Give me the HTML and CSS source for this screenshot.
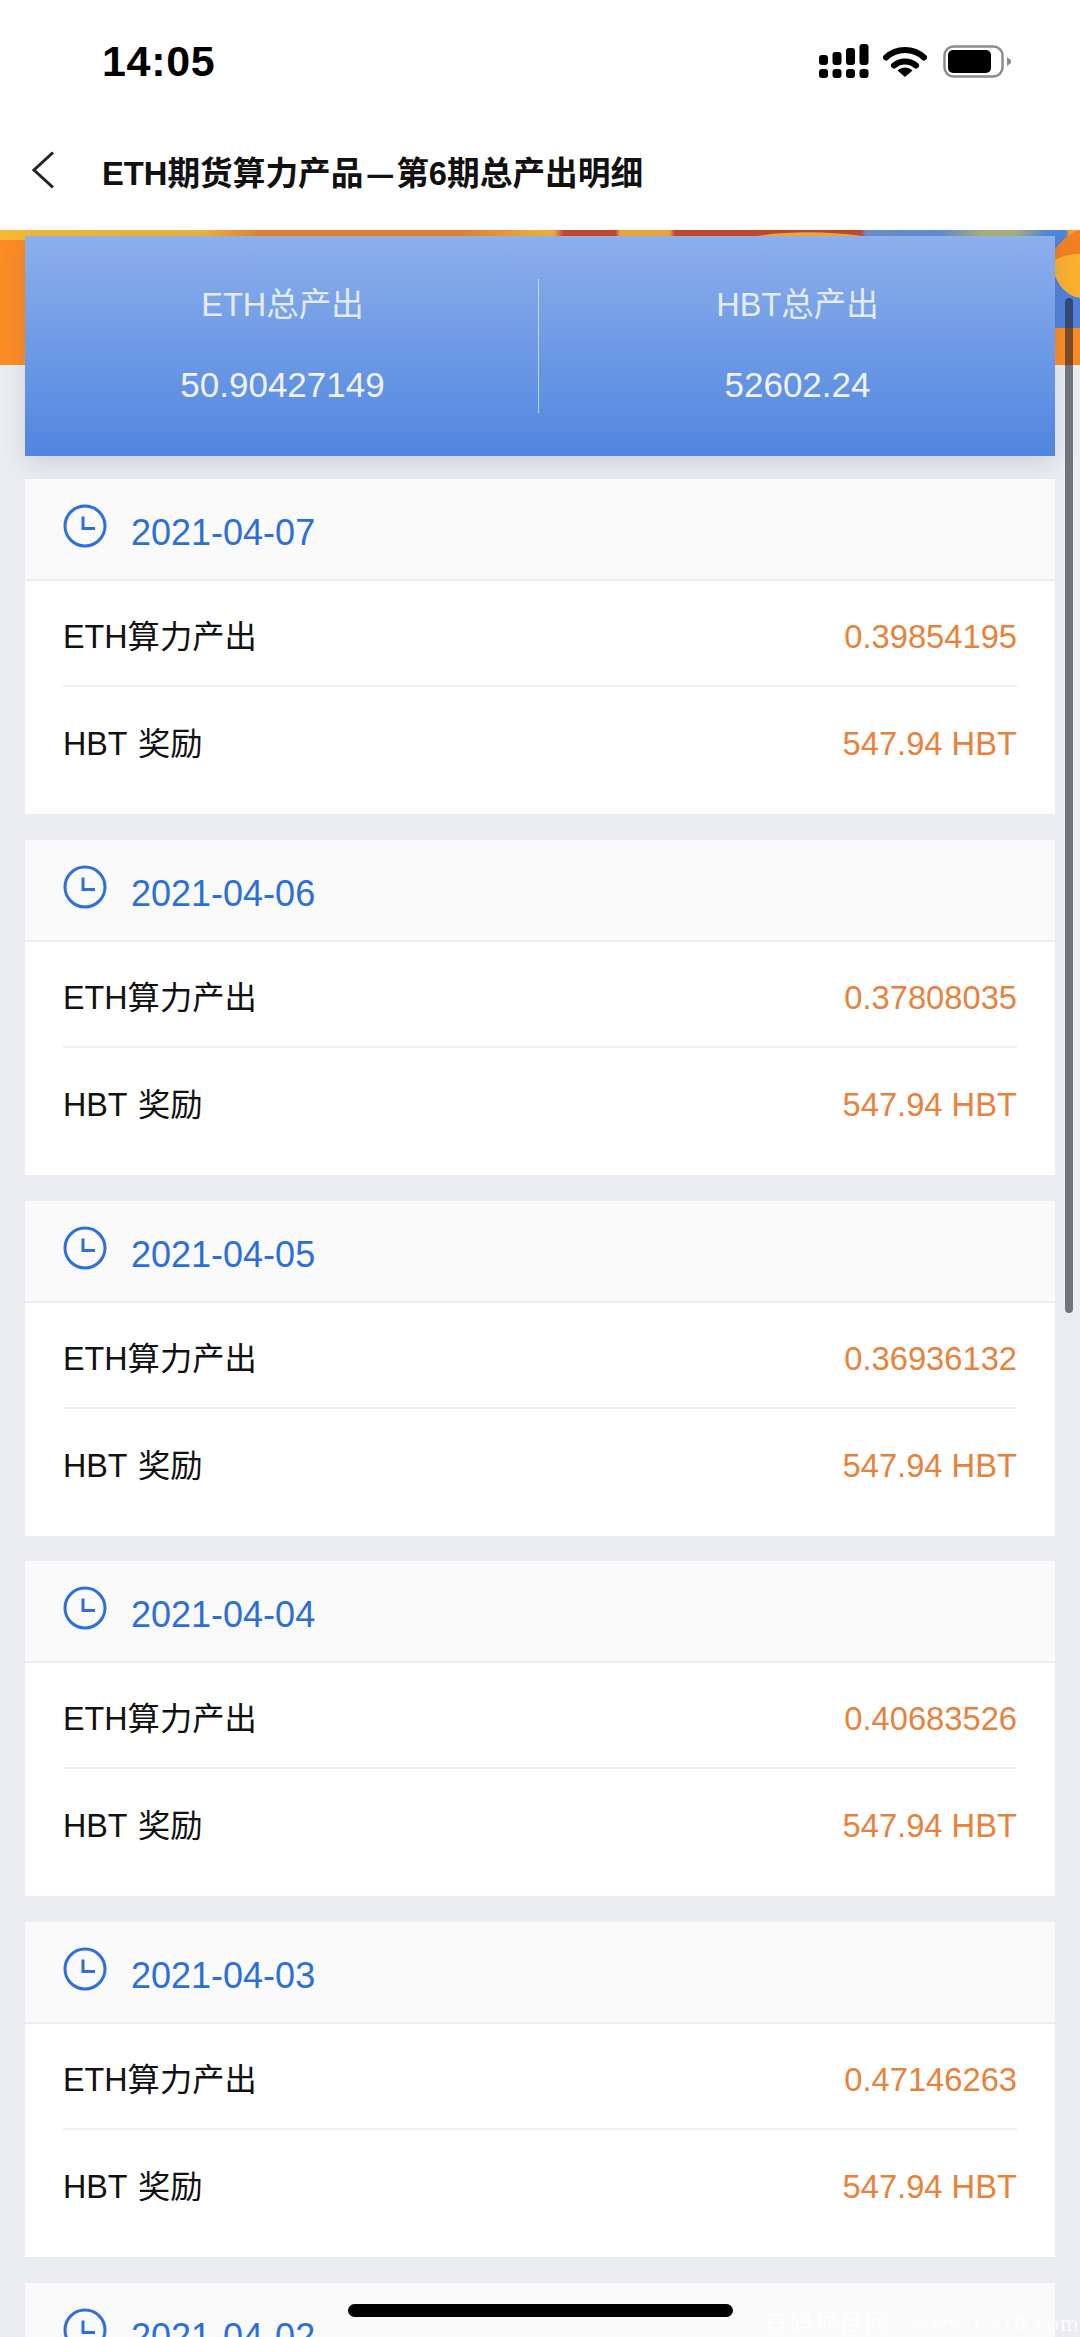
FILE: index.html
```html
<!DOCTYPE html>
<html lang="zh-CN">
<head>
<meta charset="utf-8">
<title>ETH期货算力产品</title>
<link rel="stylesheet" href="styles.css">
</head>
<body>
<div class="page">
  <div class="status">
    <span class="time">14:05</span>
    <div class="status-icons">
      <svg class="signal" width="50" height="36" viewBox="0 0 50 36"><g fill="#000"><rect x="0" y="12" width="9" height="10" rx="3"/><rect x="13.500" y="9" width="9" height="13" rx="3"/><rect x="27" y="5" width="9" height="17" rx="3"/><rect x="40.500" y="1" width="9" height="21" rx="3"/><rect x="0" y="26" width="9" height="9" rx="3"/><rect x="13.500" y="26" width="9" height="9" rx="3"/><rect x="27" y="26" width="9" height="9" rx="3"/><rect x="40.500" y="26" width="9" height="9" rx="3"/></g></svg>
      <svg class="wifi" width="44" height="32" viewBox="0 0 44 32"><path d="M3 12.500C13.500 2.500 30.500 2.500 41 12.500" fill="none" stroke="#000" stroke-width="6" stroke-linecap="round"/><path d="M11 20.500C17 15 27 15 33 20.500" fill="none" stroke="#000" stroke-width="6" stroke-linecap="round"/><path d="M14.500 25.500C19 21.500 25 21.500 29.500 25.500L22 32Z" fill="#000"/></svg>
      <svg class="battery" width="69" height="33" viewBox="0 0 69 33"><rect x="1.500" y="1.500" width="58" height="30" rx="9" fill="#fff" stroke="#8c8c8c" stroke-width="2.500"/><rect x="5" y="5" width="43" height="23" rx="5" fill="#000"/><path d="M64 12L68 15V18L64 21Z" fill="#8c8c8c"/></svg>
    </div>
  </div>
  <div class="navbar">
    <svg class="back" width="24" height="38" viewBox="0 0 24 38"><path d="M22 1.500L3 19L22 36.500" fill="none" stroke="#222" stroke-width="3"/></svg>
    <h1 class="title">ETH期货算力产品<span class="dash">—</span>第6期总产出明细</h1>
  </div>
  <div class="content">
    <div class="banner">
      <svg class="banner-art" viewBox="0 0 1080 135" preserveAspectRatio="none">
        <defs><linearGradient id="top-strip" x1="0" x2="1" y1="0" y2="0">
          <stop offset="0" stop-color="#f4b934"/>
          <stop offset=".19" stop-color="#eeb23a"/>
          <stop offset=".24" stop-color="#e8812f"/>
          <stop offset=".43" stop-color="#e8812f"/>
          <stop offset=".5" stop-color="#efb03a"/>
          <stop offset=".513" stop-color="#efb03a"/>
          <stop offset=".522" stop-color="#c5472a"/>
          <stop offset=".57" stop-color="#c5472a"/>
          <stop offset=".574" stop-color="#eda93a"/>
          <stop offset=".62" stop-color="#eda93a"/>
          <stop offset=".625" stop-color="#c5472a"/>
          <stop offset=".797" stop-color="#c5472a"/>
          <stop offset=".802" stop-color="#6a8fc8"/>
          <stop offset=".87" stop-color="#5f8dd0"/>
          <stop offset=".91" stop-color="#a8b07a"/>
          <stop offset=".94" stop-color="#a8b07a"/>
          <stop offset=".97" stop-color="#5486d8"/>
          <stop offset=".987" stop-color="#5486d8"/>
          <stop offset=".99" stop-color="#f5a12f"/>
          <stop offset="1" stop-color="#f5a12f"/>
        </linearGradient></defs>
        <rect width="1080" height="135" fill="#fb8b25"/>
        <rect width="25" height="10" fill="#f8b92f"/>
        <rect width="1080" height="7" fill="url(#top-strip)"/>
        <path d="M750 7C785 1 825 1 862 6V7Z" fill="#efa93a"/>
        <rect x="1055" y="6" width="25" height="92" fill="#4f82d8"/>
        <path d="M1055 20C1064 8 1072 2 1080 0V68C1068 66 1060 58 1055 46Z" fill="#fbb02f"/>
        <path d="M1055 20C1064 8 1072 2 1080 0V24C1070 24 1062 26 1055 30Z" fill="#f27f22"/>
      </svg>
    </div>
    <div class="summary">
      <div class="summary-cell">
        <span class="summary-label">ETH总产出</span>
        <span class="summary-value">50.90427149</span>
      </div>
      <div class="summary-cell">
        <span class="summary-label">HBT总产出</span>
        <span class="summary-value">52602.24</span>
      </div>
    </div>
    <div class="list">
      <section class="card">
        <div class="card-head"><svg class="clock" width="44" height="44" viewBox="0 0 44 44"><circle cx="22" cy="22" r="20" fill="none" stroke="#2f6fdc" stroke-width="3"/><path d="M20 12.500V24.500H32" fill="none" stroke="#2f6fdc" stroke-width="3"/></svg><span class="date">2021-04-07</span></div>
        <div class="row row-first"><span class="label">ETH算力产出</span><span class="value">0.39854195</span></div>
        <div class="row"><span class="label">HBT 奖励</span><span class="value">547.94 HBT</span></div>
      </section>
      <section class="card">
        <div class="card-head"><svg class="clock" width="44" height="44" viewBox="0 0 44 44"><circle cx="22" cy="22" r="20" fill="none" stroke="#2f6fdc" stroke-width="3"/><path d="M20 12.500V24.500H32" fill="none" stroke="#2f6fdc" stroke-width="3"/></svg><span class="date">2021-04-06</span></div>
        <div class="row row-first"><span class="label">ETH算力产出</span><span class="value">0.37808035</span></div>
        <div class="row"><span class="label">HBT 奖励</span><span class="value">547.94 HBT</span></div>
      </section>
      <section class="card">
        <div class="card-head"><svg class="clock" width="44" height="44" viewBox="0 0 44 44"><circle cx="22" cy="22" r="20" fill="none" stroke="#2f6fdc" stroke-width="3"/><path d="M20 12.500V24.500H32" fill="none" stroke="#2f6fdc" stroke-width="3"/></svg><span class="date">2021-04-05</span></div>
        <div class="row row-first"><span class="label">ETH算力产出</span><span class="value">0.36936132</span></div>
        <div class="row"><span class="label">HBT 奖励</span><span class="value">547.94 HBT</span></div>
      </section>
      <section class="card">
        <div class="card-head"><svg class="clock" width="44" height="44" viewBox="0 0 44 44"><circle cx="22" cy="22" r="20" fill="none" stroke="#2f6fdc" stroke-width="3"/><path d="M20 12.500V24.500H32" fill="none" stroke="#2f6fdc" stroke-width="3"/></svg><span class="date">2021-04-04</span></div>
        <div class="row row-first"><span class="label">ETH算力产出</span><span class="value">0.40683526</span></div>
        <div class="row"><span class="label">HBT 奖励</span><span class="value">547.94 HBT</span></div>
      </section>
      <section class="card">
        <div class="card-head"><svg class="clock" width="44" height="44" viewBox="0 0 44 44"><circle cx="22" cy="22" r="20" fill="none" stroke="#2f6fdc" stroke-width="3"/><path d="M20 12.500V24.500H32" fill="none" stroke="#2f6fdc" stroke-width="3"/></svg><span class="date">2021-04-03</span></div>
        <div class="row row-first"><span class="label">ETH算力产出</span><span class="value">0.47146263</span></div>
        <div class="row"><span class="label">HBT 奖励</span><span class="value">547.94 HBT</span></div>
      </section>
      <section class="card">
        <div class="card-head"><svg class="clock" width="44" height="44" viewBox="0 0 44 44"><circle cx="22" cy="22" r="20" fill="none" stroke="#2f6fdc" stroke-width="3"/><path d="M20 12.500V24.500H32" fill="none" stroke="#2f6fdc" stroke-width="3"/></svg><span class="date">2021-04-02</span></div>
      </section>
    </div>
    <div class="scrollbar"></div>
  </div>
  <div class="home-bar"></div>
  <div class="watermark">首码项目网 www.E318.com</div>
</div>
</body>
</html>
```

FILE: styles.css
```css
* { box-sizing: border-box; }
html, body { margin: 0; padding: 0; }
body {
  width: 1080px;
  height: 2337px;
  overflow: hidden;
  font-family: "Liberation Sans", "Noto Sans CJK SC", sans-serif;
  background: #ebedf0;
}
.page { position: relative; width: 1080px; height: 2337px; overflow: hidden; }
.status {
  height: 122px;
  background: #fff;
  display: flex;
  justify-content: space-between;
  align-items: flex-start;
  padding: 36px 68px 0 102px;
}
.time { font-size: 43px; line-height: 50px; font-weight: 700; color: #000; letter-spacing: .7px; }
.status-icons { display: flex; align-items: flex-start; margin-top: 7px; }
.signal { margin-right: 14px; }
.wifi { margin-top: 2px; margin-right: 16px; }
.battery { margin-top: 2px; }
.navbar {
  height: 108px;
  background: #fff;
  display: flex;
  align-items: center;
  padding: 0 0 0 31px;
}
.back { margin-top: -12px; margin-right: 47px; }
.title { margin: -4px 0 0; font-size: 32.700px; line-height: 44px; font-weight: 700; color: #111; }
.dash { display: inline-block; transform: scaleX(.78); }
.content { position: relative; }
.banner { height: 135px; }
.banner-art { display: block; width: 1080px; height: 135px; }
.summary {
  position: relative;
  margin: -129px 25px 0;
  height: 220px;
  display: flex;
  background: linear-gradient(180deg, #8dafeb 0%, #5086e0 100%);
  box-shadow: 0 8px 22px rgba(80, 90, 120, .18);
}
.summary-cell {
  flex: 1;
  display: flex;
  flex-direction: column;
  align-items: center;
  color: #fff;
  padding-top: 46px;
  position: relative;
}
.summary-cell + .summary-cell::before {
  content: "";
  position: absolute;
  left: -2px;
  top: 43px;
  height: 134px;
  width: 1px;
  background: rgba(255, 255, 255, .6);
}
.summary-label { font-size: 32.500px; line-height: 46px; opacity: .8; }
.summary-value { font-size: 35px; line-height: 44px; margin-top: 35px; opacity: .9; }
.list { position: relative; padding: 23px 25px 0; display: flex; flex-direction: column; gap: 25.750px; }
.card { background: #fff; height: 335px; flex: none; }
.card-head {
  height: 102px;
  background: #fafafb;
  border-bottom: 2px solid #ebedf0;
  display: flex;
  align-items: flex-start;
  padding: 25px 0 0 38px;
}
.clock { display: block; flex: none; }
.date { font-size: 36px; line-height: 44px; color: #2d6fd9; margin: 7px 0 0 24px; }
.row {
  margin: 0 38px;
  height: 106px;
  display: flex;
  justify-content: space-between;
  align-items: center;
  padding-top: 8px;
  color: #111;
}
.row-first { border-bottom: 2px solid #eef0f2; }
.label { font-size: 32.300px; line-height: 44px; color: #111; word-spacing: 2px; }
.value { font-size: 32.700px; line-height: 44px; color: #e8823a; }
.scrollbar {
  position: absolute;
  left: 1065px;
  top: 68px;
  width: 8px;
  height: 1015px;
  border-radius: 4px;
  background: rgba(35, 35, 45, .6);
}
.home-bar {
  position: absolute;
  left: 348px;
  top: 2304px;
  width: 385px;
  height: 13px;
  border-radius: 7px;
  background: #000;
}
.watermark {
  position: absolute;
  right: 0;
  top: 2309px;
  font-size: 24px;
  line-height: 28px;
  letter-spacing: 1.200px;
  word-spacing: 14px;
  white-space: nowrap;
  color: rgba(255, 255, 255, .8);
  font-family: "Liberation Serif", "Noto Sans CJK SC", serif;
}
```
